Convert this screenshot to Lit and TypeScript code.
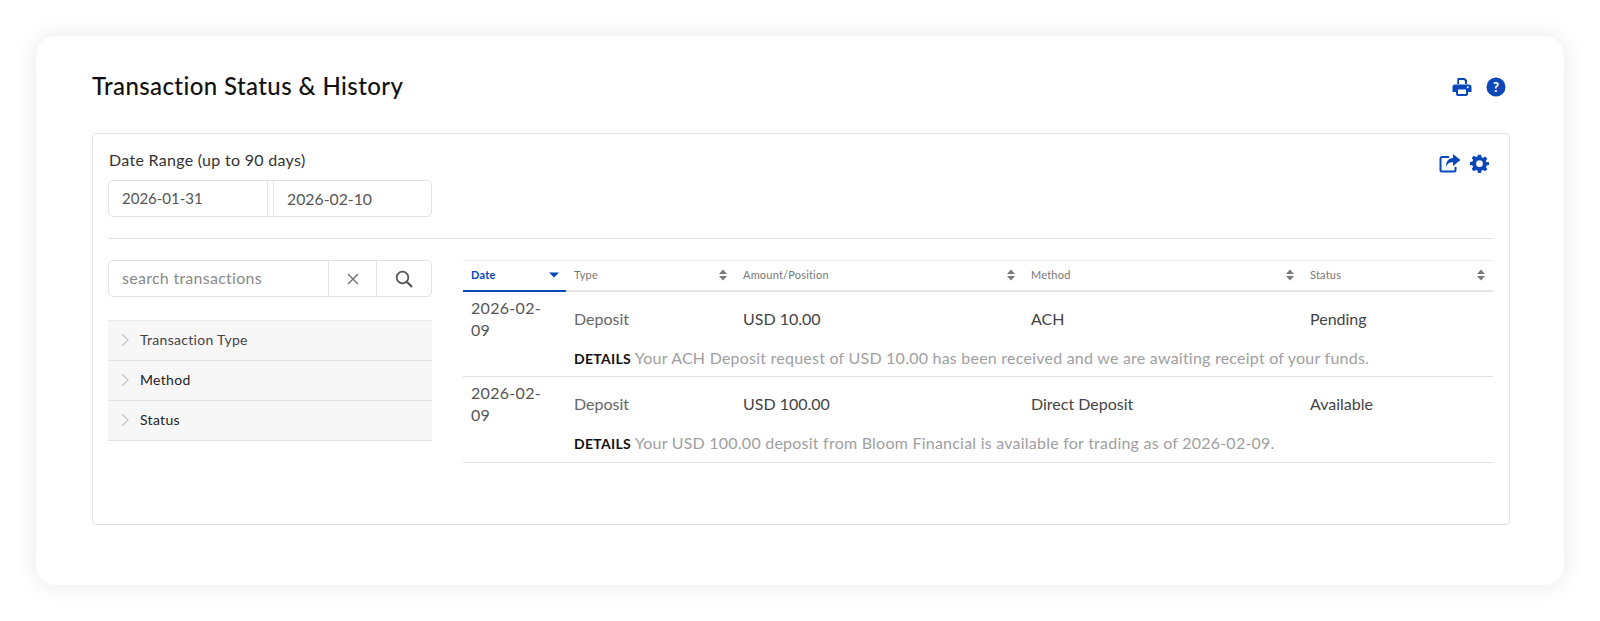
import { LitElement, html, css } from "lit";
import { customElement } from "lit/decorators.js";

const sortIcon = html`<svg class="sort" viewBox="0 0 8 12" width="8" height="12"><path d="M4 0.5 8 5H0z M0 7h8L4 11.5z" fill="#7a7a7a"/></svg>`;
const rows = [
  { date: "2026-02-09", type: "Deposit", amount: "USD 10.00", method: "ACH", status: "Pending", details: "Your ACH Deposit request of USD 10.00 has been received and we are awaiting receipt of your funds." },
  { date: "2026-02-09", type: "Deposit", amount: "USD 100.00", method: "Direct Deposit", status: "Available", details: "Your USD 100.00 deposit from Bloom Financial is available for trading as of 2026-02-09." },
];

@customElement("app-root")
export class AppRoot extends LitElement {
  static styles = css`
    :host { display: block; height: 621px; background: #fff; font-family: Lato, "Open Sans", sans-serif; color: #3c3c3c; padding: 36px; box-sizing: border-box; }
    .card { height: 549px; background: #fff; border-radius: 20px; box-shadow: 0 0 24px rgba(0,0,0,.09); padding: 30px 54px 60px 56px; box-sizing: border-box; display: flex; flex-direction: column; }
    .head { display: flex; justify-content: space-between; align-items: center; height: 38px; margin-bottom: 29px; }
    h1 { margin: 0; font-size: 24px; font-weight: 500; color: #111; letter-spacing: .4px; }
    .icons { display: flex; gap: 14px; align-items: center; padding: 4px 4px 0 0; }
    .panel { border: 1px solid #e3e3e3; border-radius: 4px; height: 392px; box-sizing: border-box; padding: 16px 16px 0 15px; position: relative; }
    .tools { position: absolute; top: 19px; right: 20px; display: flex; gap: 9px; align-items: center; }
    .label { font-size: 16px; line-height: 20px; color: #333; letter-spacing: .3px; margin-bottom: 10px; padding-left: 1px; }
    .range { width: 324px; height: 37px; padding-bottom: 1px; border: 1px solid #e3e3e3; border-radius: 5px; box-sizing: border-box; display: grid; grid-template-columns: 158px 7px 1fr; font-size: 15px; color: #555; align-items: center; }
    .range span { padding-left: 13px; }
    .range i { height: 100%; border-left: 1px solid #e3e3e3; border-right: 1px solid #e3e3e3; box-sizing: border-box; }
    .range span:last-child { padding-left: 13px; font-size: 15.8px; }
    hr { border: 0; border-top: 1px solid #e3e3e3; margin: 21px 0 21px; }
    .body { display: flex; gap: 31px; align-items: flex-start; }
    .side { width: 324px; flex: none; }
    .search { height: 37px; margin-bottom: 23px; border: 1px solid #e3e3e3; border-radius: 5px; box-sizing: border-box; display: grid; grid-template-columns: 219px 48px 1fr; align-items: center; font-size: 16px; letter-spacing: .27px; color: #8a8a8a; }
    .search > * { height: 100%; display: flex; align-items: center; box-sizing: border-box; }
    .search .q { padding: 0 0 3px 13px; }
    .search .b { border-left: 1px solid #e3e3e3; justify-content: center; }
    .acc { border-top: 1px solid #ececec; }
    .acc div { height: 40px; box-sizing: border-box; background: #f7f7f7; border-bottom: 1px solid #e3e3e3; display: flex; align-items: center; gap: 10px; padding: 0 0 2px 12px; font-size: 14px; color: #222; letter-spacing: .3px; }
    .acc div:first-child { color: #444; }
    .table { flex: 1; display: grid; grid-template-columns: 103px 169px 288px 279px 191px; border-top: 1px solid #ececec; }
    .th { height: 27px; padding: 0 8px 2px 8px; border-bottom: 2px solid #e5e5e5; box-sizing: content-box; display: flex; justify-content: space-between; align-items: center; font-size: 11px; color: #777; letter-spacing: .2px; }
    .th.on { color: #0a47b8; font-weight: 700; border-bottom-color: #0a47b8; padding-right: 7px; }
    .td { font-size: 16px; color: #444; padding: 0 8px; display: flex; align-items: center; height: 53px; box-sizing: border-box; }
    .td.t { color: #666; }
    .td.d { padding: 5px 8px 0; line-height: 22px; display: block; grid-row: span 2; border-bottom: 1px solid #e3e3e3; height: auto; color: #555; letter-spacing: .3px; }
    .det { grid-column: 2 / 6; font-size: 16px; color: #a0a0a0; height: 33px; box-sizing: border-box; padding: 0 8px; border-bottom: 1px solid #e3e3e3; line-height: 26px; letter-spacing: .23px; white-space: nowrap; }
    .det.first { height: 32px; }
    .det b { color: #111; font-weight: 700; font-size: 14px; letter-spacing: .3px; }
    svg { display: block; }
  `;

  render() {
    const chev = html`<svg width="10" height="16" viewBox="0 0 10 16"><path d="M2 2l6 6-6 6" fill="none" stroke="#c4c4c4" stroke-width="1.2"/></svg>`;
    return html`<div class="card">
      <div class="head">
        <h1>Transaction Status &amp; History</h1>
        <div class="icons">
          <svg width="20" height="20" viewBox="0 0 20 20"><path fill="#0a47b8" fill-rule="evenodd" d="M5.500 1h7l2.500 2v5h-2V4l-1.300-1H7v5H5zM3 7.500h14a2.500 2.500 0 0 1 2.500 2.500v5H16v2a2 2 0 0 1-2 2H6a2 2 0 0 1-2-2v-2H.5v-5A2.500 2.500 0 0 1 3 7.500zM6 12.500v4.500h8v-4.500zM15.800 9.200a1 1 0 1 0 0 2 1 1 0 0 0 0-2z"/></svg>
          <svg width="20" height="20" viewBox="0 0 20 20"><circle cx="10" cy="10" r="9.500" fill="#0a47b8"/><text x="10" y="14.600" text-anchor="middle" font-family="Lato, sans-serif" font-weight="900" font-size="13" fill="#fff">?</text></svg>
        </div>
      </div>
      <div class="panel">
        <div class="tools">
          <svg width="22" height="20" viewBox="0 0 22 20"><path fill="none" stroke="#0a47b8" stroke-width="2" d="M10 4H3a1.500 1.500 0 0 0-1.500 1.500v11.500a1.500 1.500 0 0 0 1.500 1.500h12a1.500 1.500 0 0 0 1.500-1.500v-3"/><path fill="#0a47b8" d="M14 1l7.500 6-7.500 6V9.300c-3.500 0-6 1-6.500 5-1.200-5 1.500-9 6.500-9.300z"/></svg>
          <svg width="19" height="19" viewBox="0 0 24 24"><path fill="#0a47b8" fill-rule="evenodd" d="M10 1h4l.6 3.100 1.800.8 2.700-1.800 2.800 2.800-1.800 2.700.8 1.800L24 10v4l-3.100.6-.8 1.800 1.800 2.700-2.800 2.800-2.700-1.800-1.800.8L14 24h-4l-.6-3.100-1.800-.8-2.700 1.800-2.800-2.800 1.800-2.700-.8-1.800L0 14v-4l3.100-.6.8-1.800L2.100 4.900l2.800-2.800 2.700 1.800 1.800-.8zM12 8a4.200 4.200 0 1 0 0 8.400A4.200 4.200 0 0 0 12 8z"/></svg>
        </div>
        <div class="label">Date Range (up to 90 days)</div>
        <div class="range"><span>2026-01-31</span><i></i><span>2026-02-10</span></div>
        <hr />
        <div class="body">
          <div class="side">
            <div class="search">
              <div class="q">search transactions</div>
              <div class="b"><svg width="12" height="12" viewBox="0 0 12 12"><path d="M1 1l10 10M11 1 1 11" stroke="#777" stroke-width="1.500"/></svg></div>
              <div class="b"><svg width="18" height="18" viewBox="0 0 18 18"><circle cx="7.500" cy="7.500" r="5.800" fill="none" stroke="#555" stroke-width="1.800"/><path d="M11.800 11.800 17 17" stroke="#555" stroke-width="2.200"/></svg></div>
            </div>
            <div class="acc">
              <div>${chev}Transaction Type</div>
              <div>${chev}Method</div>
              <div>${chev}Status</div>
            </div>
          </div>
          <div class="table">
            <div class="th on">Date<svg width="10" height="6" viewBox="0 0 10 6"><path d="M0 .5h10L5 5.500z" fill="#0a47b8"/></svg></div>
            <div class="th">Type${sortIcon}</div>
            <div class="th">Amount/Position${sortIcon}</div>
            <div class="th">Method${sortIcon}</div>
            <div class="th">Status${sortIcon}</div>
            ${rows.map((r, i) => html`
              <div class="td d">${r.date.slice(0, 8)}<br />${r.date.slice(8)}</div>
              <div class="td t">${r.type}</div>
              <div class="td">${r.amount}</div>
              <div class="td">${r.method}</div>
              <div class="td">${r.status}</div>
              <div class="det ${i === 0 ? "first" : ""}"><b>DETAILS</b> ${r.details}</div>
            `)}
          </div>
        </div>
      </div>
    </div>`;
  }
}
